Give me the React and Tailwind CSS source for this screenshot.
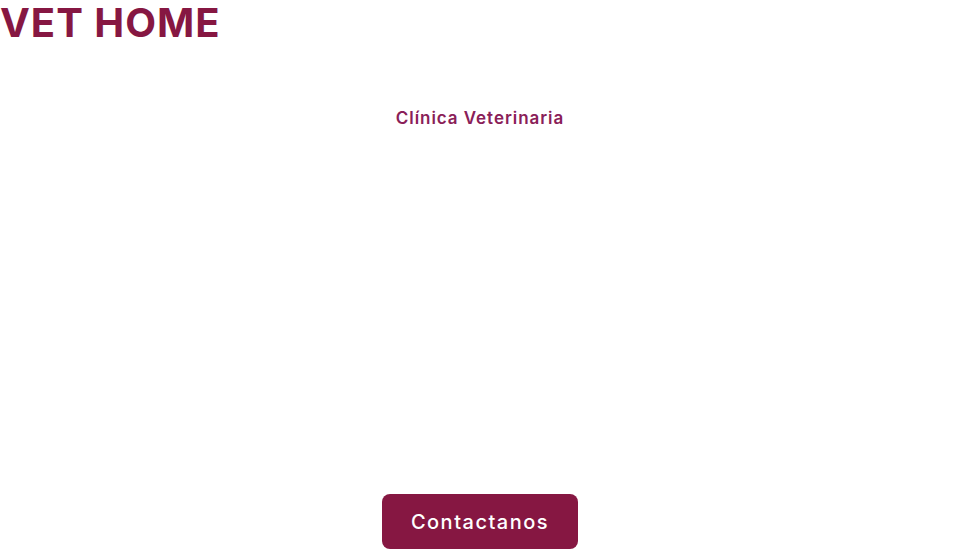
export default function App() {
  return (
    <div className="min-h-screen bg-white" style={{ fontFamily: 'Inter, "Liberation Sans", sans-serif' }}>
      <header className="h-[46px] flex items-start">
        <h1 className="mt-[3px] text-[40px] leading-[40px] font-bold tracking-[1px] text-[#861742]">VET HOME</h1>
      </header>

      <main className="flex flex-col items-center">
        <p className="mt-[60px] text-[17px] leading-[24px] font-semibold tracking-[0.95px] text-[#8a2058]">Clínica Veterinaria</p>

        <div className="h-[364px]" />

        <button className="w-[196px] h-[55px] rounded-[8px] bg-[#861742] text-white text-[20px] font-medium tracking-[1.5px]">
          Contactanos
        </button>
      </main>
    </div>
  );
}
